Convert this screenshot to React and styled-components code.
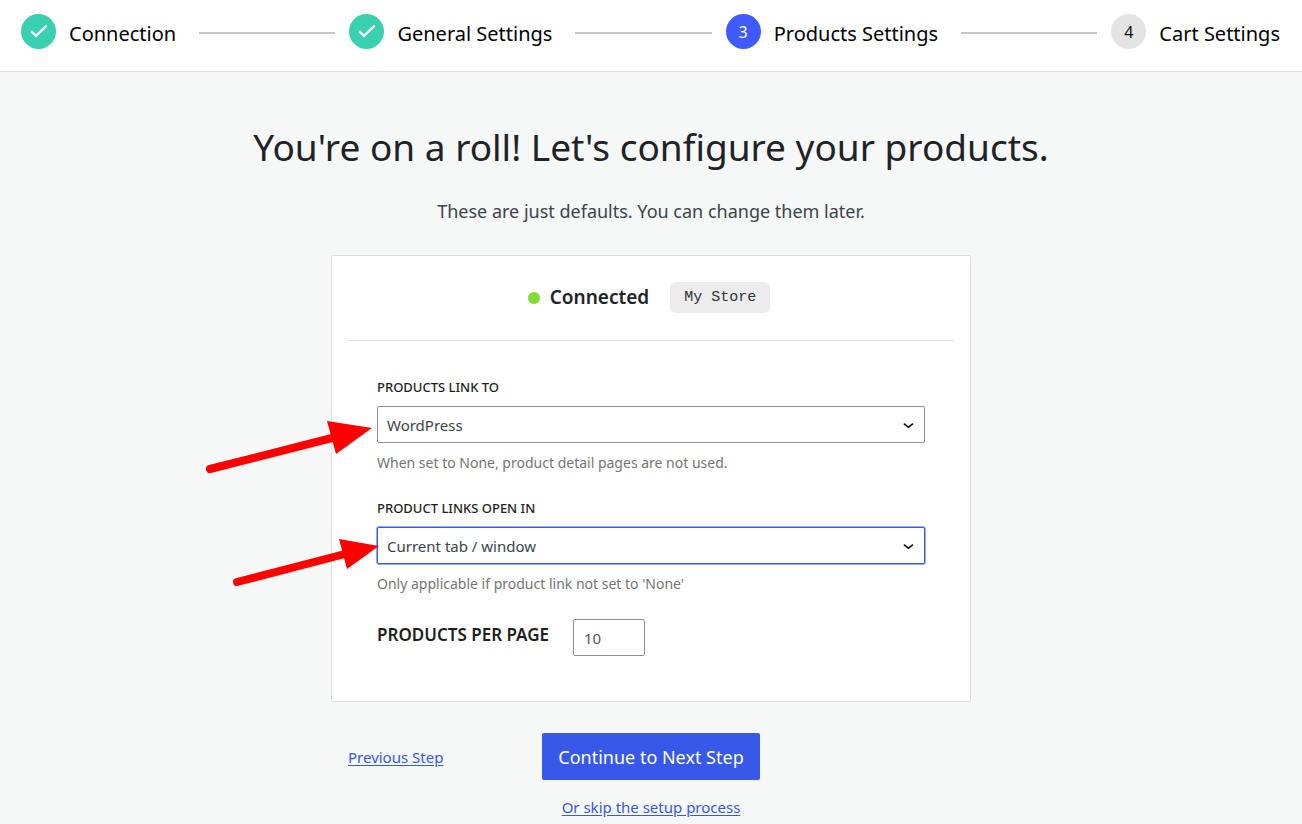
import React from 'react';
import styled, { createGlobalStyle } from 'styled-components';

const GlobalStyle = createGlobalStyle`
	*, *::before, *::after {
		box-sizing: border-box;
	}

	body {
		margin: 0;
		background: #f6f7f7;
		color: #1d2327;
		font-family: 'Noto Sans', 'Open Sans', sans-serif;
		font-size: 15px;
		line-height: 20px;
	}
`;

const Header = styled.header`
	background: white;
	border-bottom: 1px solid #dcdfde;
	padding: 14px 22px 22px 21px;
`;

const Steps = styled.ol`
	display: flex;
	align-items: center;
	list-style: none;
	margin: 0;
	padding: 0;
`;

const Step = styled.li`
	display: flex;
	align-items: center;
	flex: ${props => (props.$last ? '0 0 auto' : '1 1 auto')};
`;

const stepColors = {
	done: '#38d0ae',
	current: '#3f5bff',
	todo: '#e4e4e4',
};

const StepBadge = styled.span`
	display: flex;
	align-items: center;
	justify-content: center;
	flex: none;
	width: 35px;
	height: 35px;
	border-radius: 50%;
	background: ${props => stepColors[props.$status]};
	color: ${props => (props.$status === 'todo' ? '#101010' : 'white')};
	font-size: 16px;
`;

const StepName = styled.span`
	margin-left: 13px;
	padding-top: 4px;
	color: black;
	font-size: 20px;
	line-height: 28px;
	white-space: nowrap;
`;

const StepLine = styled.span`
	flex: 1;
	height: 2px;
	margin: 3px 14px 0 23px;
	background: #c7c7c7;
`;

const Main = styled.main`
	display: flex;
	flex-direction: column;
	align-items: center;
	padding: 50px 16px 7px;
`;

const Title = styled.h1`
	margin: 0 0 26px;
	font-size: 37px;
	font-weight: 400;
	line-height: 50px;
	text-align: center;
`;

const Subtitle = styled.p`
	margin: 0 0 31px;
	color: #3c434a;
	font-size: 18px;
	line-height: 26px;
	text-align: center;
`;

const Card = styled.form`
	width: 100%;
	max-width: 640px;
	background: white;
	border: 1px solid #dcdedf;
	border-radius: 2px;
	padding: 0 16px;
`;

const Status = styled.div`
	display: flex;
	align-items: center;
	justify-content: center;
	padding: 26px 4px 27px 0;
	border-bottom: 1px solid #e2e2e2;
`;

const StatusDot = styled.span`
	width: 12px;
	height: 12px;
	border-radius: 50%;
	background: #84db34;
`;

const StatusText = styled.strong`
	margin: 0 21px 0 10px;
	font-size: 19px;
	font-weight: 600;
	line-height: 31px;
`;

const StoreName = styled.code`
	padding: 0 14px;
	border-radius: 6px;
	background: #ececec;
	color: #2c3338;
	font-family: 'Liberation Mono', monospace;
	font-size: 15px;
	line-height: 31px;
`;

const Fields = styled.div`
	padding: 36px 29px 45px;
`;

const Field = styled.div`
	margin-bottom: 25px;
`;

const FieldLabel = styled.label`
	display: block;
	margin-bottom: 9px;
	color: #1e1e1e;
	font-size: 13px;
	font-weight: 500;
	text-transform: uppercase;
`;

const SelectWrapper = styled.div`
	position: relative;
`;

const Select = styled.select`
	appearance: none;
	display: block;
	width: 100%;
	height: 37px;
	padding: 0 32px 0 9px;
	border: 1px solid ${props => (props.$active ? '#3858e9' : '#8c8f94')};
	border-radius: 2px;
	box-shadow: ${props => (props.$active ? '0 0 0 1px #3858e980' : 'none')};
	background: white;
	color: #3c434a;
	font: inherit;
	outline: none;
`;

const Chevron = styled.svg`
	position: absolute;
	top: 15px;
	right: 10px;
	width: 12px;
	height: 9px;
	pointer-events: none;
`;

const Arrow = styled.svg`
	position: absolute;
	top: ${props => props.$top}px;
	right: calc(100% - ${props => props.$overlap}px);
	pointer-events: none;
`;

const Help = styled.p`
	margin: 10px 0 0;
	color: #757575;
	font-size: 14px;
`;

const InlineField = styled.div`
	display: flex;
	align-items: flex-start;
	gap: 24px;
`;

const InlineLabel = styled.label`
	color: #1e1e1e;
	font-size: 17px;
	font-weight: 600;
	line-height: 32px;
	text-transform: uppercase;
`;

const NumberInput = styled.input`
	width: 72px;
	height: 37px;
	padding: 0 10px;
	border: 1px solid #8c8f94;
	border-radius: 2px;
	background: white;
	color: #50575e;
	font: inherit;
	appearance: textfield;
`;

const Footer = styled.div`
	display: grid;
	grid-template-columns: 1fr auto 1fr;
	align-items: center;
	width: 100%;
	max-width: 640px;
	margin: 31px 0 17px;
	padding: 0 17px;
`;

const StepLink = styled.a`
	justify-self: start;
	color: #3858e9;
	text-decoration: underline;
	text-underline-offset: 2px;
`;

const NextButton = styled.button`
	height: 47px;
	padding: 0 16px;
	border: 0;
	border-radius: 2px;
	background: #3858e9;
	color: white;
	font: inherit;
	font-size: 18px;
	cursor: pointer;
`;

const steps = [
	{ name: 'Connection', status: 'done' },
	{ name: 'General Settings', status: 'done' },
	{ name: 'Products Settings', status: 'current' },
	{ name: 'Cart Settings', status: 'todo' },
];

const Check = () => (
	<svg width="35" height="35" viewBox="0 0 35 35" fill="none" stroke="white" strokeWidth="2.4">
		<path d="M10.9 17.8 15 21.9 25 12.3" strokeLinecap="round" />
	</svg>
);

const SelectField = ({ id, label, options, help, active, children }) => (
	<Field>
		<FieldLabel htmlFor={id}>{label}</FieldLabel>
		<SelectWrapper>
			<Select id={id} $active={active}>
				{options.map(option => (
					<option key={option}>{option}</option>
				))}
			</Select>
			<Chevron viewBox="0 0 12 9" fill="none" stroke="#101010" strokeWidth="1.6">
				<path d="M0.8 2.7 5.4 6.2 10 2.7" />
			</Chevron>
			{children}
		</SelectWrapper>
		<Help>{help}</Help>
	</Field>
);

const App = () => (
	<>
		<GlobalStyle />
		<Header>
			<Steps>
				{steps.map((step, i) => (
					<Step key={step.name} $last={i === steps.length - 1}>
						<StepBadge $status={step.status}>{step.status === 'done' ? <Check /> : i + 1}</StepBadge>
						<StepName>{step.name}</StepName>
						{i < steps.length - 1 && <StepLine />}
					</Step>
				))}
			</Steps>
		</Header>
		<Main>
			<Title>You're on a roll! Let's configure your products.</Title>
			<Subtitle>These are just defaults. You can change them later.</Subtitle>
			<Card id="products-settings" onSubmit={e => e.preventDefault()}>
				<Status>
					<StatusDot />
					<StatusText>Connected</StatusText>
					<StoreName>My Store</StoreName>
				</Status>
				<Fields>
					<SelectField
						id="link-to"
						label="Products link to"
						options={['WordPress', 'None']}
						help="When set to None, product detail pages are not used."
					>
						<Arrow $top={12} $overlap={-5} width="168" height="58" viewBox="0 0 168 58" fill="red">
							<path d="M6 51 L128 20" stroke="red" strokeWidth="8" strokeLinecap="round" />
							<path d="M123 3 L168 10 L132 36 Z" />
						</Arrow>
					</SelectField>
					<SelectField
						id="open-in"
						label="Product links open in"
						options={['Current tab / window', 'New tab / window']}
						help="Only applicable if product link not set to 'None'"
						active
					>
						<Arrow $top={9} $overlap={2} width="148" height="54" viewBox="0 0 148 54" fill="red">
							<path d="M6 46 L114 18" stroke="red" strokeWidth="8" strokeLinecap="round" />
							<path d="M108 3 L148 10 L116 33 Z" />
						</Arrow>
					</SelectField>
					<InlineField>
						<InlineLabel htmlFor="per-page">Products per page</InlineLabel>
						<NumberInput id="per-page" type="number" defaultValue="10" />
					</InlineField>
				</Fields>
			</Card>
			<Footer>
				<StepLink href="#previous">Previous Step</StepLink>
				<NextButton type="submit" form="products-settings">
					Continue to Next Step
				</NextButton>
			</Footer>
			<StepLink href="#skip">Or skip the setup process</StepLink>
		</Main>
	</>
);

export default App;
